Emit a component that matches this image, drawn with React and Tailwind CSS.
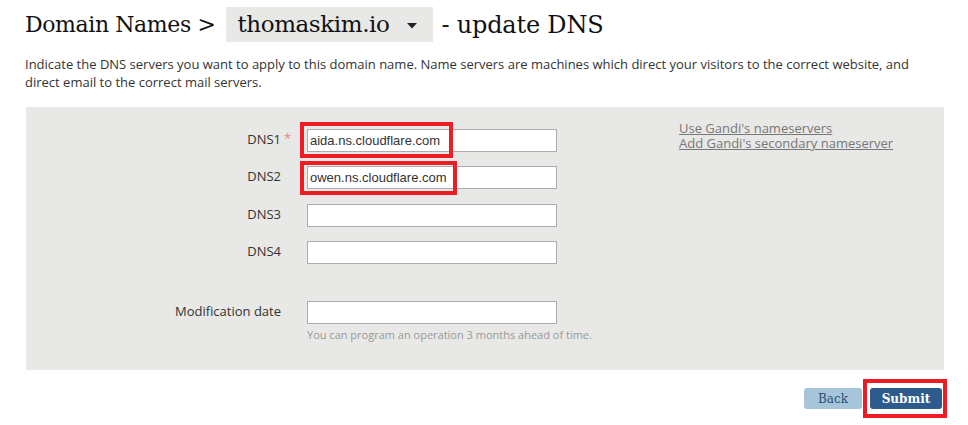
import React from "react";

const sans = { fontFamily: '"Open Sans", "Noto Sans", sans-serif' };

function Row({ label, star, value, top }) {
  return (
    <div className={`flex items-center ${top}`}>
      <div className="w-[255px] shrink-0 text-right text-[13px] text-[#333] relative -mt-[2px]" style={sans}>
        {label}
        {star && <span className="absolute left-[258px] top-[-1px] text-[#e8808a]">*</span>}
      </div>
      <div className="ml-[26px] w-[250px] h-[23px] bg-white border border-[#a9adb3] flex items-center px-[2px] text-[13px] text-[#333] font-['Liberation_Sans',sans-serif]">
        {value}
      </div>
    </div>
  );
}

export default function App() {
  return (
    <div className="w-[968px] h-[425px] bg-white relative overflow-hidden">
      <div className="flex items-center pl-[25px] pt-[7px] h-[42px] text-[22px] text-[#111] font-['DejaVu_Serif',serif] tracking-[-0.4px]">
        <span>Domain Names &gt;</span>
        <div className="ml-[11px] h-[35px] w-[207px] bg-[#e8e8e6] flex items-center pl-[11px] text-[23px]">
          <span>thomaskim.io</span>
          <svg className="ml-[18px] mt-[2px]" width="10" height="6" viewBox="0 0 10 6">
            <path d="M0 0 L10 0 L5 5.5 Z" fill="#222" />
          </svg>
        </div>
        <span className="ml-[8px] text-[24px] tracking-[-0.2px]">- update DNS</span>
      </div>

      <p className="mx-[25px] mt-[13px] text-[13px] leading-[18px] text-[#333]" style={sans}>
        Indicate the DNS servers you want to apply to this domain name. Name servers are machines which direct your visitors to the correct website, and direct email to the correct mail servers.
      </p>

      <div className="ml-[26px] mt-[16px] w-[918px] h-[263px] bg-[#e8e8e6] relative flex">
        <div className="flex flex-col w-[531px] shrink-0">
          <Row label="DNS1" star value="aida.ns.cloudflare.com" top="mt-[22px]" />
          <Row label="DNS2" value="owen.ns.cloudflare.com" top="mt-[14px]" />
          <Row label="DNS3" value="" top="mt-[15px]" />
          <Row label="DNS4" value="" top="mt-[14px]" />
          <Row label="Modification date" value="" top="mt-[37px]" />
          <div className="ml-[281px] mt-[3px] text-[11px] text-[#999] whitespace-nowrap" style={sans}>
            You can program an operation 3 months ahead of time.
          </div>
        </div>
        <div className="ml-[122px] mt-[14px] flex flex-col text-[13px] leading-[15px] text-[#777]" style={sans}>
          <a className="underline">Use Gandi's nameservers</a>
          <a className="underline">Add Gandi's secondary nameserver</a>
        </div>

        <div className="absolute left-[274px] top-[15px] w-[153px] h-[36px] border-[4px] border-[#ee1c25]" />
        <div className="absolute left-[274px] top-[54px] w-[157px] h-[34px] border-[4px] border-[#ee1c25]" />
      </div>

      <div className="flex justify-end items-center mt-[18px] pr-[26px] gap-[8px] font-['DejaVu_Serif',serif] text-[12px]">
        <div className="w-[58px] h-[21px] rounded-[3px] bg-[#a6c5da] text-[#2d4f73] flex items-center justify-center">Back</div>
        <div className="relative w-[72px] h-[21px] rounded-[3px] bg-[#2e5b8e] text-white font-bold flex items-center justify-center">
          Submit
          <div className="absolute left-[-7px] top-[-9px] w-[84px] h-[39px] border-[4px] border-[#ee1c25]" />
        </div>
      </div>
    </div>
  );
}
